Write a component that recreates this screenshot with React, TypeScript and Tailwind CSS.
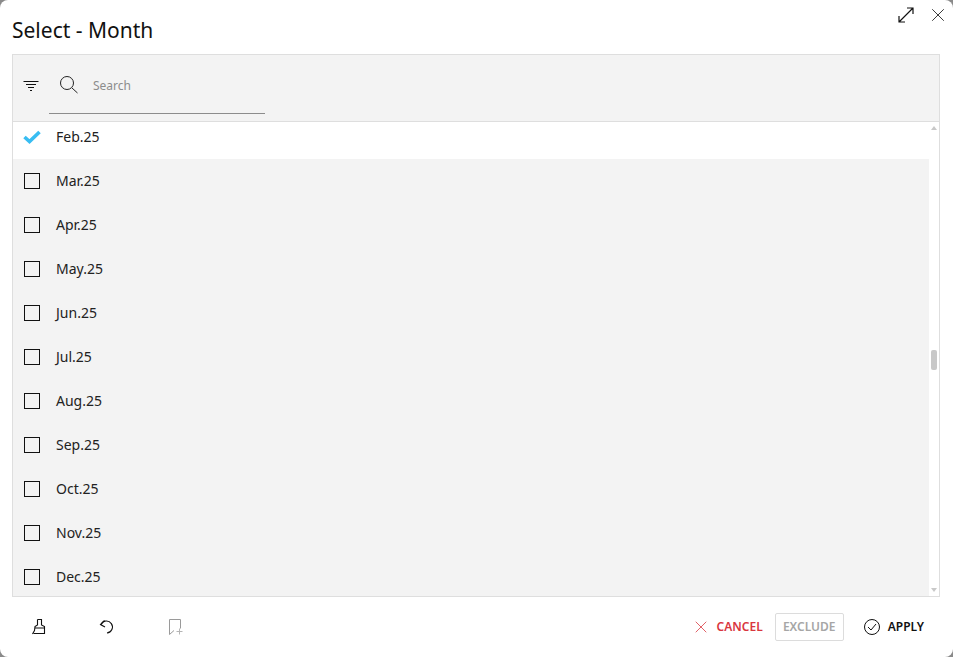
import { X } from "lucide-react";

const months = ["Mar.25", "Apr.25", "May.25", "Jun.25", "Jul.25", "Aug.25", "Sep.25", "Oct.25", "Nov.25", "Dec.25"];

const font = "font-['Noto_Sans','Open_Sans',sans-serif]";

const App = () => {
  return (
    <div className={`w-[953px] h-[657px] bg-[#8a8a8a] overflow-hidden ${font}`}>
      <div className="w-full h-full bg-white rounded-[8px] flex flex-col pl-3 pr-[13px]">
        <div className="h-[54px] flex shrink-0 relative">
          <h1 className="pt-[16px] text-[21px] leading-[28px] text-[#111]">Select - Month</h1>
          <div className="absolute right-[-9px] top-[4px] flex items-center gap-[12px]">
            <svg width="18" height="18" viewBox="0 0 18 18" fill="none" stroke="#111" strokeWidth="1.200">
              <path d="M2 16 16 2M10 2h6v6M2 10v6h6" />
            </svg>
            <X size={22} strokeWidth={0.9} color="#111" />
          </div>
        </div>

        <div className="h-[543px] border border-[#dedede] flex flex-col shrink-0">
          <div className="h-[67px] shrink-0 bg-[#f3f3f3] border-b border-[#dedede] flex">
            <div className="w-[36px] flex justify-center pt-[25px]">
              <svg width="16" height="12" viewBox="0 0 16 12" stroke="#111" strokeWidth="1" fill="none">
                <path d="M.5 1.500h15M3 4.500h10M5 7.500h6M7 10.500h2" />
              </svg>
            </div>
            <div className="w-[216px] h-[59px] border-b border-[#8c8c8c] flex items-center">
              <svg width="20" height="20" viewBox="0 0 20 20" fill="none" stroke="#222" strokeWidth="1" className="ml-[10px] mt-[1px]">
                <circle cx="8" cy="8" r="6.500" />
                <path d="M13 13l5.500 5" />
              </svg>
              <span className="ml-[14px] mt-[4px] text-[12px] text-[#8c8c8c]">Search</span>
            </div>
          </div>

          <div className="flex flex-1 min-h-0">
            <div className="flex-1 min-w-0 overflow-hidden flex flex-col">
              <div className="h-[37px] shrink-0 bg-white flex items-center pl-[10px] pb-[8px]">
                <svg width="18" height="14" viewBox="0 0 18 14" fill="none" stroke="#38bdf2" strokeWidth="3.600">
                  <path d="M1.500 7 6.500 11.500 16.500 2" />
                </svg>
                <span className="ml-[15px] text-[14px] text-[#222]">Feb.25</span>
              </div>
              {months.map((m) => (
                <div key={m} className="h-[44px] shrink-0 bg-[#f3f3f3] flex items-center pl-[11px]">
                  <div className="w-[16px] h-[16px] border border-[#111]" />
                  <span className="ml-[16px] -mt-[2px] text-[14px] text-[#222]">{m}</span>
                </div>
              ))}
            </div>
            <div className="w-[10px] shrink-0 bg-white relative">
              <div className="absolute top-[4px] left-[2px] w-0 h-0 border-x-[3px] border-x-transparent border-b-[4px] border-b-[#c8c8c8]" />
              <div className="absolute top-[228px] left-[2px] w-[6px] h-[20px] rounded-[2px] bg-[#c8c8c8]" />
              <div className="absolute bottom-[4px] left-[2px] w-0 h-0 border-x-[3px] border-x-transparent border-t-[4px] border-t-[#c8c8c8]" />
            </div>
          </div>
        </div>

        <div className="flex-1 flex items-center">
          <div className="flex items-center gap-[50px] pl-[19px]">
            <svg width="18" height="18" viewBox="0 0 18 18" fill="none" stroke="#111" strokeWidth="1.100">
              <path d="M6.500 1.500h4v5.500l3 1.500v7H2.500" />
              <path d="M6.500 1.500V7l-2.500 1.500-.5 4-2 3.500M4 10h9.500" />
            </svg>
            <svg width="18" height="18" viewBox="0 0 18 18" fill="none" stroke="#111" strokeWidth="1.100" className="-ml-[1px]">
              <path d="M3 6.500A6 6 0 1 1 9 15" />
              <path d="M6.500 2.500 2.500 6.500 7 9" />
            </svg>
            <svg width="18" height="18" viewBox="0 0 18 18" fill="none" stroke="#9a9a9a" strokeWidth="1" className="ml-[1px]">
              <path d="M13.500 10.500V1.500h-11v15l4.500-4" />
              <path d="M9.500 13.500h6M12.500 10.500v6" stroke="#b5b5b5" />
            </svg>
          </div>
          <div className="ml-auto flex items-center pr-[16px]">
            <X size={20} strokeWidth={0.95} color="#d9363e" />
            <span className="ml-[6px] text-[12px] font-semibold text-[#d9363e]">CANCEL</span>
            <div className="ml-[12px] h-[28px] w-[69px] border border-[#dcdcdc] rounded-[2px] flex items-center justify-center text-[12px] font-semibold text-[#a6a6a6]">
              EXCLUDE
            </div>
            <div className="ml-[20px] w-[16px] h-[16px] rounded-full border border-[#111] flex items-center justify-center">
              <svg width="10" height="8" viewBox="0 0 10 8" fill="none" stroke="#111" strokeWidth="1">
                <path d="M1 4l3 3 5-6" />
              </svg>
            </div>
            <span className="ml-[8px] text-[12px] font-semibold text-[#111]">APPLY</span>
          </div>
        </div>
      </div>
    </div>
  );
};

export default App;
